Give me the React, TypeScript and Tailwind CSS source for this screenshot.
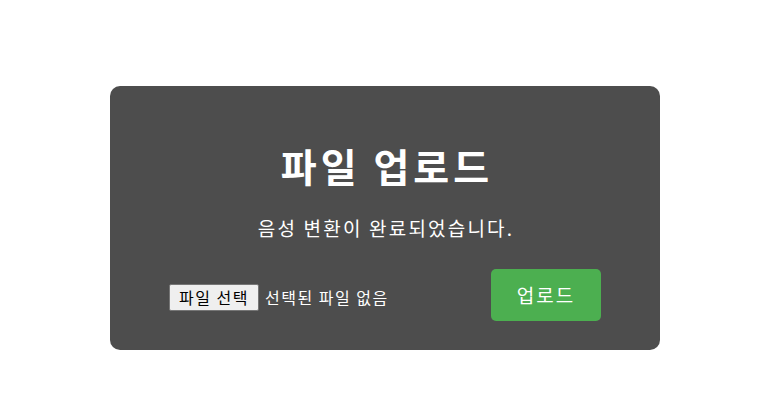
export default function App() {
  return (
    <div className="min-h-screen bg-white flex justify-center pt-[86px] font-['Noto_Sans_CJK_KR','Noto_Sans',sans-serif]">
      <div className="w-[550px] h-[264px] rounded-[10px] bg-[#4d4d4d] text-white flex flex-col items-center">
        <h1 className="mt-[55px] text-[39px] font-bold leading-[48px] tracking-[4px] pl-[4px]">파일 업로드</h1>
        <p className="mt-[25px] text-[19px] leading-[28px] tracking-[2.2px] pl-[2px]">음성 변환이 완료되었습니다.</p>
        <div className="mt-[27px] w-full px-[59px] flex items-center justify-between">
          <div className="flex items-center gap-[6px] text-[16px] pt-[4px]">
            <button className="w-[90px] h-[27px] bg-[#efefef] text-black border border-[#767676] rounded-[2px] leading-none tracking-[1.5px]">
              파일 선택
            </button>
            <span className="tracking-[1.5px]">선택된 파일 없음</span>
          </div>
          <button className="w-[110px] h-[52px] rounded-[5px] bg-[#4caf50] text-white text-[19px] tracking-[2px]">
            업로드
          </button>
        </div>
      </div>
    </div>
  );
}
